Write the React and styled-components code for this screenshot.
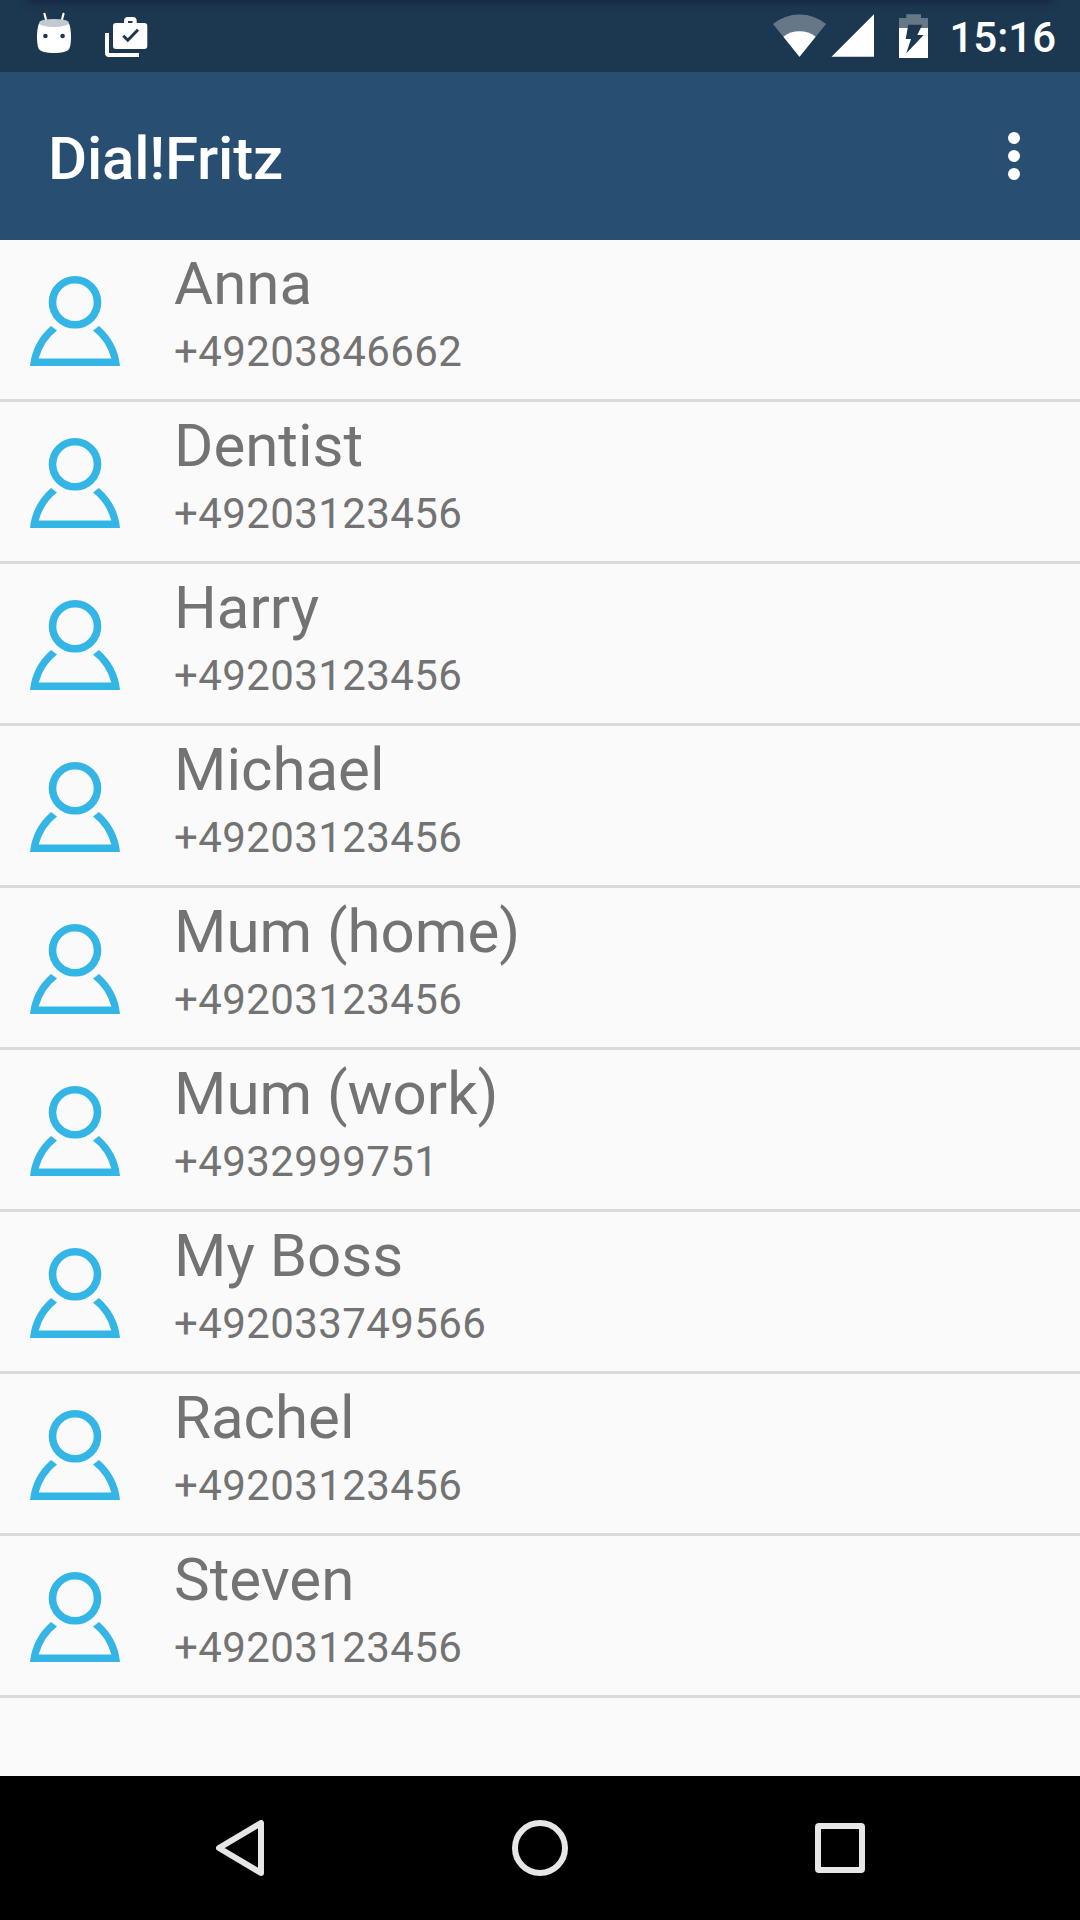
import React from "react";
import styled, { createGlobalStyle } from "styled-components";

const GlobalStyle = createGlobalStyle`
  *, *::before, *::after { box-sizing: border-box; }
  body { margin: 0; background: #fafafa; }
  svg { display: block; flex: none; }
`;

const Screen = styled.div`
  display: flex;
  flex-direction: column;
  width: 1080px;
  height: 1920px;
  overflow: hidden;
  background: #fafafa;
  font-family: Roboto, "Noto Sans", sans-serif;
`;

const StatusBar = styled.header`
  position: relative;
  display: flex;
  justify-content: space-between;
  align-items: flex-start;
  flex: none;
  height: 72px;
  padding: 12px 24px 0 36px;
  background: #1c3850;

  &::before {
    content: "";
    position: absolute;
    top: -8px;
    left: 30px;
    right: 30px;
    height: 8px;
    box-shadow: 0 0 9px 2px rgba(22, 28, 56, 0.75);
  }
`;

const Notifications = styled.div`
  display: flex;
  gap: 32px;
`;

const SystemIcons = styled.div`
  display: flex;
  align-items: flex-start;
`;

const IconSlot = styled.span`
  padding-top: ${({ $top = 2 }) => $top}px;
  margin-right: ${({ $gap }) => $gap}px;
`;

const Clock = styled.time`
  padding-top: 1px;
  color: #fff;
  font-size: 42px;
  font-weight: 500;
  line-height: 50px;
`;

const AppBar = styled.div`
  display: flex;
  justify-content: space-between;
  align-items: center;
  flex: none;
  height: 168px;
  padding: 0 60px 0 48px;
  background: #284f71;
`;

const Title = styled.h1`
  margin: 6px 0 0;
  color: #fff;
  font-size: 60px;
  font-weight: 500;
  line-height: 70px;
  letter-spacing: -0.2px;
`;

const MenuButton = styled.button`
  display: flex;
  flex-direction: column;
  gap: 6px;
  padding: 0;
  border: 0;
  background: none;
`;

const Dot = styled.span`
  width: 12px;
  height: 12px;
  border-radius: 50%;
  background: #fff;
`;

const ContactList = styled.ul`
  flex: 1;
  margin: 0;
  padding: 0;
  list-style: none;
`;

const ContactRow = styled.li`
  display: flex;
  align-items: flex-start;
  gap: 54px;
  height: 162px;
  padding-left: 30px;
  border-bottom: 3px solid #dadada;
`;

const Avatar = styled.span`
  padding-top: 36px;
`;

const Details = styled.div`
  display: flex;
  flex-direction: column;
  gap: 8px;
  padding-top: 9px;
  color: #737373;
`;

const Name = styled.span`
  font-size: 60px;
  line-height: 70px;
`;

const Phone = styled.span`
  font-size: 42px;
  line-height: 49px;
  letter-spacing: 0.4px;
`;

const NavBar = styled.nav`
  display: grid;
  grid-template-columns: repeat(3, 300px);
  justify-content: center;
  flex: none;
  height: 144px;
  background: #000;
`;

const NavButton = styled.button`
  display: flex;
  align-items: center;
  justify-content: center;
  padding: 0;
  border: 0;
  background: none;
`;

const PersonIcon = () => (
  <svg width="90" height="90" viewBox="0 0 90 90" fill="none">
    <circle cx="45" cy="26.3" r="22.5" stroke="#33b5e5" strokeWidth="7.6" />
    <path
      fill="#33b5e5"
      fillRule="evenodd"
      d="M0 90Q2.500 66 21 50L27 54.600Q13.500 65 8.700 82.500H81.300Q76.500 65 63 54.600L69 50Q87.500 66 90 90Z"
    />
  </svg>
);

const RobotIcon = () => (
  <svg width="36" height="42" viewBox="0 0 36 42">
    <path d="M8.500 1.800L10.500 9.500M27.500 1.800L25.500 9.500" stroke="#fff" strokeWidth="2.2" strokeLinecap="round" />
    <path
      fill="#fff"
      d="M3 11.500C1.500 15 1 20 1 25C1 30 1.500 34 2.700 36.800C4.500 39.800 11 41 18 41C25 41 31.500 39.800 33.300 36.800C34.500 34 35 30 35 25C35 20 34.500 15 33 11.500Z"
    />
    <ellipse cx="18" cy="10.900" rx="14.900" ry="4" fill="#c2c9d0" />
    <circle cx="9.400" cy="24" r="2.300" fill="#1c3850" />
    <circle cx="26.600" cy="24" r="2.300" fill="#1c3850" />
  </svg>
);

const WorkDoneIcon = () => (
  <svg width="44" height="46" viewBox="0 -4 44 46" fill="none">
    <path d="M3 17V37Q3 39 5 39H35" stroke="#fff" strokeWidth="4" />
    <path
      fill="#fff"
      fillRule="evenodd"
      d="M12 7H20V5Q20 1 24 1H28.700Q32.700 1 32.700 5V7H40.300Q43.300 7 43.300 10V30Q43.300 33 40.300 33H12Q9 33 9 30V10Q9 7 12 7ZM24 5V7H28.500V5Z"
    />
    <path d="M19.300 19.800L23.800 24.200L34 13.700" stroke="#1c3850" strokeWidth="3" />
  </svg>
);

const WifiIcon = () => (
  <svg width="54" height="43" viewBox="0 0 54 43">
    <path fill="#667888" d="M0 10A42 42 0 0 1 53 10L26.500 43Z" />
    <path fill="#fff" d="M10.400 22.800A26.500 26.500 0 0 1 42.600 22.800L26.500 42.800Z" />
  </svg>
);

const SignalIcon = () => (
  <svg width="43" height="43" viewBox="0 0 43 43">
    <path fill="#fff" d="M0.500 42.800L43 0.300V42.800Z" />
  </svg>
);

const BatteryIcon = () => (
  <svg width="29" height="44" viewBox="0 0 29 44">
    <path fill="#667888" d="M7.300 0.300H22V4H29V14H0V4H7.300Z" />
    <path fill="#fff" d="M0 14H29V44H0Z" />
    <path fill="#1c3850" d="M9.300 10.700H23.300L18.300 21H24.700L7.300 39.300L12 25H6.700Z" />
  </svg>
);

const BackIcon = () => (
  <svg width="48" height="56" viewBox="0 0 48 56">
    <path d="M45 3V53L3 28Z" fill="none" stroke="#e6e6e6" strokeWidth="6" strokeLinejoin="round" />
  </svg>
);

const HomeIcon = () => (
  <svg width="56" height="56" viewBox="0 0 56 56">
    <circle cx="28" cy="28" r="25" fill="none" stroke="#e6e6e6" strokeWidth="6" />
  </svg>
);

const RecentsIcon = () => (
  <svg width="50" height="50" viewBox="0 0 50 50">
    <rect x="3" y="3" width="44" height="44" rx="1" fill="none" stroke="#e6e6e6" strokeWidth="6" strokeLinejoin="round" />
  </svg>
);

const contacts = [
  { name: "Anna", phone: "+49203846662" },
  { name: "Dentist", phone: "+49203123456" },
  { name: "Harry", phone: "+49203123456" },
  { name: "Michael", phone: "+49203123456" },
  { name: "Mum (home)", phone: "+49203123456" },
  { name: "Mum (work)", phone: "+4932999751" },
  { name: "My Boss", phone: "+492033749566" },
  { name: "Rachel", phone: "+49203123456" },
  { name: "Steven", phone: "+49203123456" },
];

export default function App() {
  return (
    <>
      <GlobalStyle />
      <Screen>
        <StatusBar>
          <Notifications>
            <RobotIcon />
            <WorkDoneIcon />
          </Notifications>
          <SystemIcons>
            <IconSlot $gap={4}><WifiIcon /></IconSlot>
            <IconSlot $gap={25}><SignalIcon /></IconSlot>
            <IconSlot $gap={21}><BatteryIcon /></IconSlot>
            <Clock>15:16</Clock>
          </SystemIcons>
        </StatusBar>
        <AppBar>
          <Title>Dial!Fritz</Title>
          <MenuButton aria-label="More options">
            <Dot />
            <Dot />
            <Dot />
          </MenuButton>
        </AppBar>
        <ContactList>
          {contacts.map(({ name, phone }) => (
            <ContactRow key={name}>
              <Avatar><PersonIcon /></Avatar>
              <Details>
                <Name>{name}</Name>
                <Phone>{phone}</Phone>
              </Details>
            </ContactRow>
          ))}
        </ContactList>
        <NavBar>
          <NavButton aria-label="Back"><BackIcon /></NavButton>
          <NavButton aria-label="Home"><HomeIcon /></NavButton>
          <NavButton aria-label="Recents"><RecentsIcon /></NavButton>
        </NavBar>
      </Screen>
    </>
  );
}
